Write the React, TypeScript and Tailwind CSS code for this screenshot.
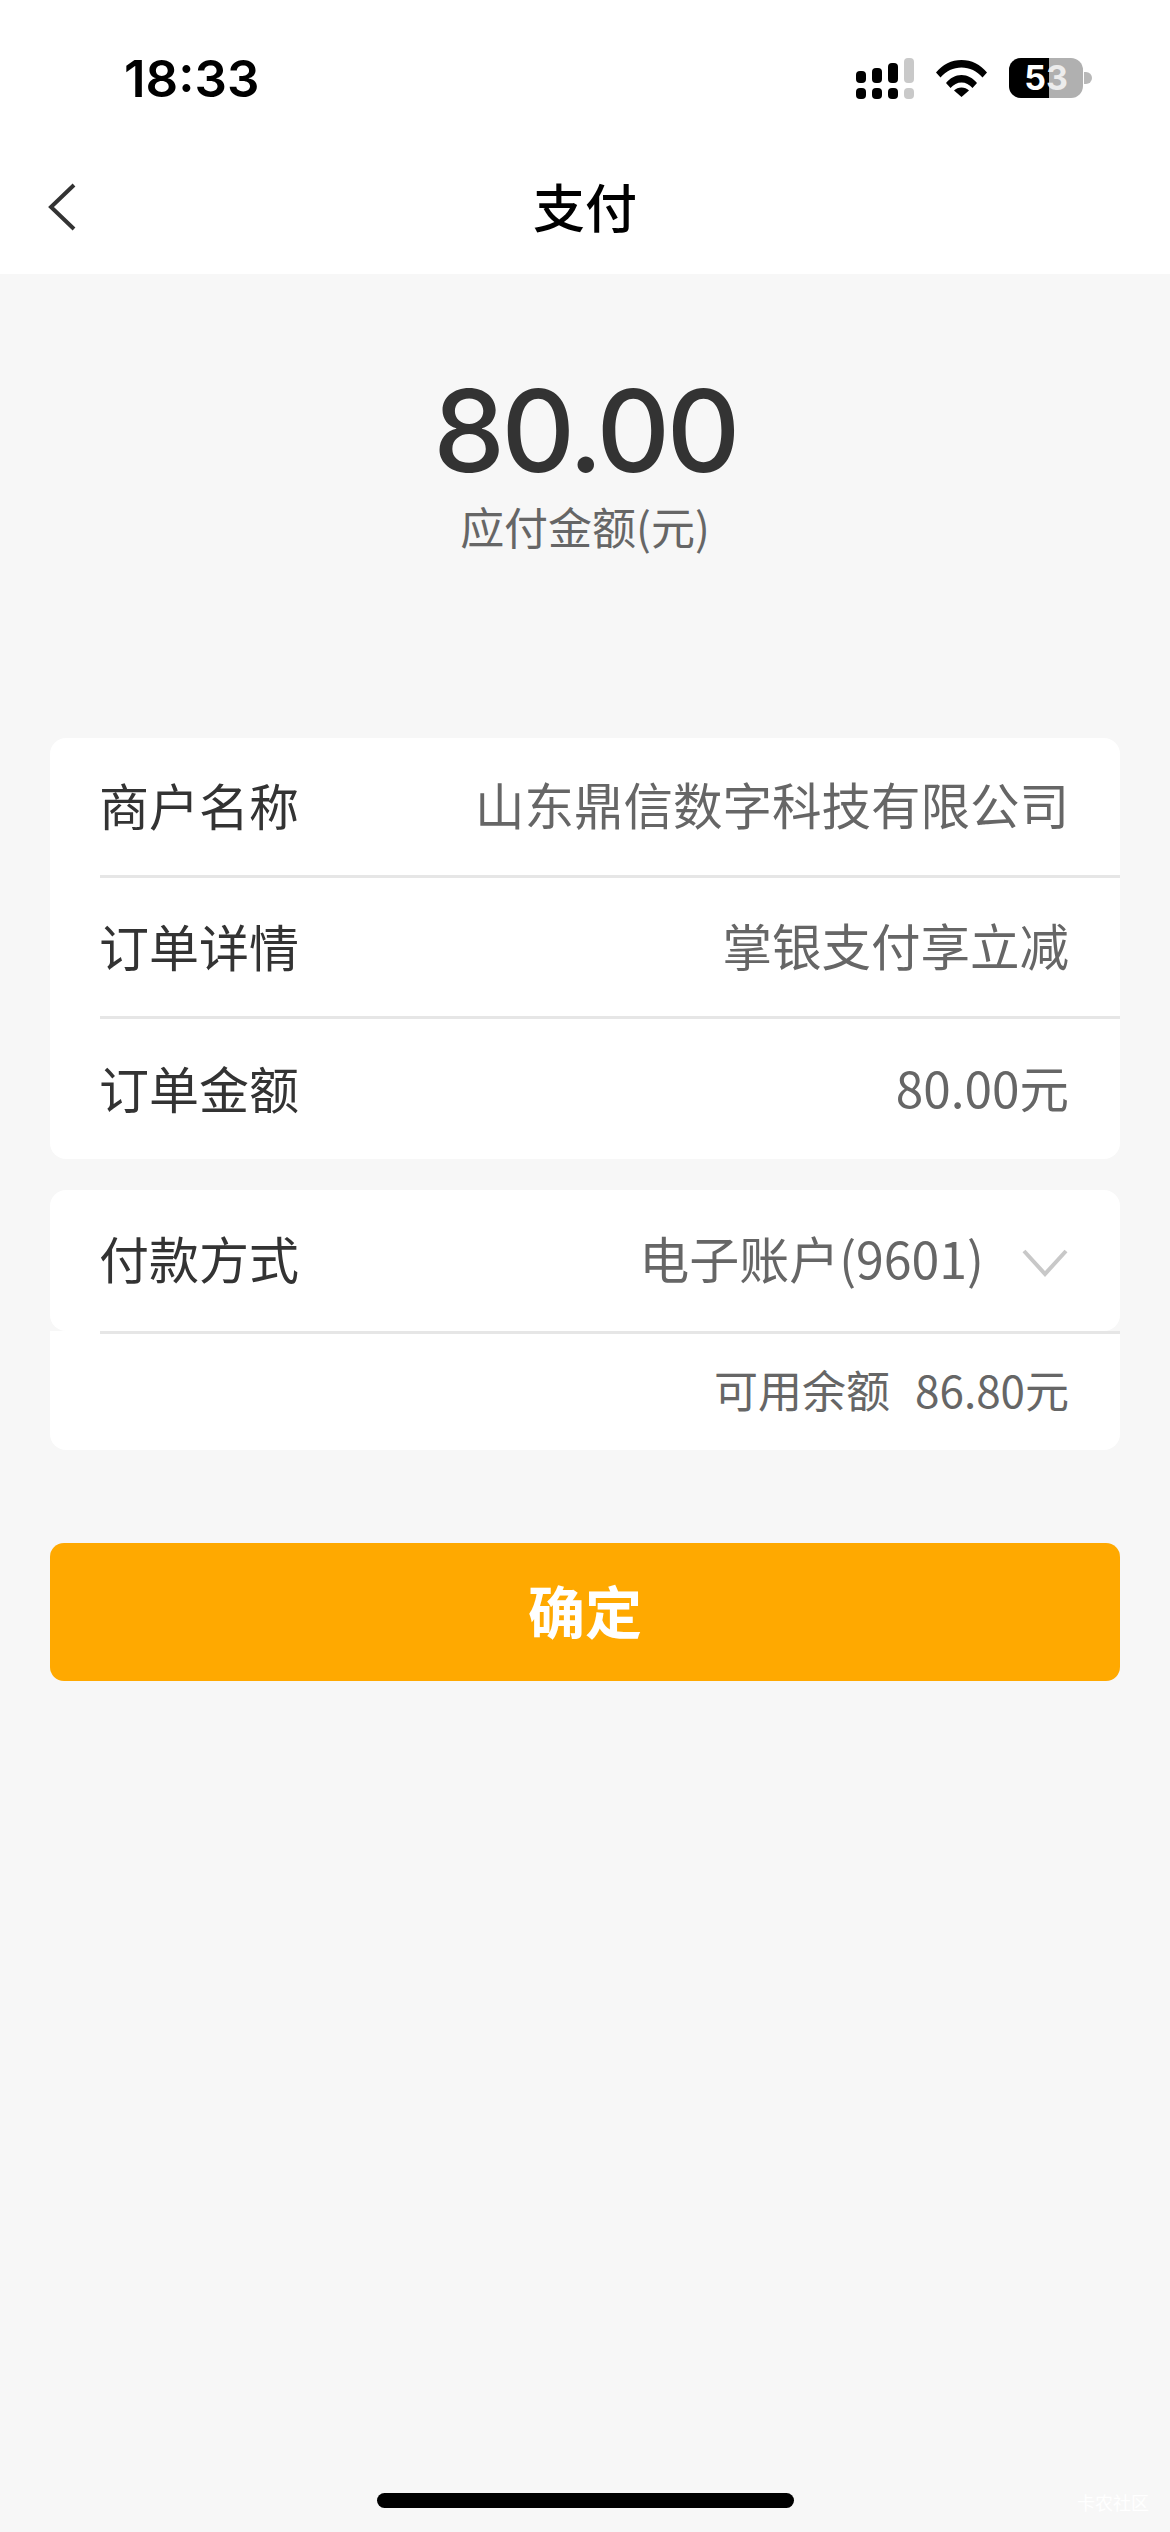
import React from "react";

const CJK = "font-['Noto_Sans_CJK_SC','Noto_Sans',sans-serif]";

function SignalIcon() {
  return (
    <svg width="58" height="41" viewBox="0 0 58 41">
      <rect x="0" y="13" width="10" height="12" rx="4" fill="#000" />
      <rect x="16" y="10" width="10" height="15" rx="4" fill="#000" />
      <rect x="32" y="5" width="10" height="20" rx="4" fill="#000" />
      <rect x="48" y="0" width="10" height="25" rx="4" fill="#c9c9c9" />
      <rect x="0" y="30" width="10" height="11" rx="4" fill="#000" />
      <rect x="16" y="30" width="10" height="11" rx="4" fill="#000" />
      <rect x="32" y="30" width="10" height="11" rx="4" fill="#000" />
      <rect x="48" y="30" width="10" height="11" rx="4" fill="#c9c9c9" />
    </svg>
  );
}

function WifiIcon() {
  return (
    <svg width="51" height="37" viewBox="0 0 51 37">
      <path d="M0 12.500C6.500 4.500 15.500 0 25.500 0S44.500 4.500 51 12.500L46.500 17.500C41 11 33.500 7.500 25.500 7.500S10 11 4.500 17.500Z" fill="#000" />
      <path d="M10 23C14 18 19.500 15 25.500 15S37 18 41 23L36.500 28C33.500 24.500 29.500 22.500 25.500 22.500S17.500 24.500 14.500 28Z" fill="#000" />
      <path d="M18 30.500C20 28.500 22.500 27.500 25.500 27.500S31 28.500 33 30.500L25.500 37Z" fill="#000" />
    </svg>
  );
}

function Battery() {
  return (
    <div className="flex items-center">
      <div className="relative w-[74px] h-[40px] rounded-[12px] overflow-hidden bg-[#b0b0b0] flex items-center justify-center">
        <div className="absolute left-0 top-0 bottom-0 w-[40px] bg-black" />
        <span className="relative flex font-['Inter',sans-serif] font-bold text-[34px] leading-none">
          <span className="text-white">5</span>
          <span className="text-[#ececec]">3</span>
        </span>
      </div>
      <div className="w-[8px] h-[12px] ml-[1px] rounded-r-full bg-[#b8b8b8]" />
    </div>
  );
}

function Row({ label, value, height }: { label: string; value: string; height: string }) {
  return (
    <div className={`${height} flex items-center justify-between pl-[49px] pr-[51px] pb-[5px]`}>
      <span className="text-[50px] leading-none text-[#333333]">{label}</span>
      <span className="text-[49.5px] leading-none text-[#666666]">{value}</span>
    </div>
  );
}

function Divider() {
  return <div className="ml-[50px] h-[3px] bg-[#e6e6e6]" />;
}

export default function App() {
  return (
    <div className={`${CJK} relative w-[1170px] h-[2532px] bg-[#f7f7f7] overflow-hidden flex flex-col`}>
      {/* Status bar + nav */}
      <div className="bg-white h-[274px] shrink-0">
        <div className="h-[154px] flex items-center justify-between pl-[124px] pr-[78px]">
          <span className="font-['Inter',sans-serif] font-semibold text-[51px] leading-none text-black mt-[2px]">
            18:33
          </span>
          <div className="flex items-center gap-[22px] mt-[2px]">
            <SignalIcon />
            <WifiIcon />
            <Battery />
          </div>
        </div>
        <div className="relative h-[104px] flex items-center justify-center">
          <svg
            className="absolute left-[46px] top-[28px]"
            width="32"
            height="50"
            viewBox="0 0 32 50"
            fill="none"
          >
            <path d="M28 3L5 25L28 47" stroke="#333333" strokeWidth="4" />
          </svg>
          <span className="text-[52px] leading-none font-medium text-black">支付</span>
        </div>
      </div>

      {/* Amount */}
      <div className="flex flex-col items-center pt-[93px] h-[464px] shrink-0">
        <span className="font-['Inter',sans-serif] font-medium text-[114px] leading-[128px] tracking-[-3.5px] text-[#333333]">
          80.00
        </span>
        <span className="text-[44px] leading-none mt-[9px] text-[#666666]">应付金额(元)</span>
      </div>

      {/* Order info */}
      <div className="mx-[50px] bg-white rounded-[16px]">
        <Row height="h-[137px]" label="商户名称" value="山东鼎信数字科技有限公司" />
        <Divider />
        <Row height="h-[138px]" label="订单详情" value="掌银支付享立减" />
        <Divider />
        <Row height="h-[140px]" label="订单金额" value="80.00元" />
      </div>

      {/* Payment method */}
      <div className="mx-[50px] mt-[31px]">
        <div className="h-[141px] bg-white rounded-[16px] flex items-center justify-between pl-[49px] pr-[52px] pb-[8px]">
          <span className="text-[50px] leading-none text-[#333333]">付款方式</span>
          <div className="flex items-center gap-[38px]">
            <span className="text-[50px] leading-none text-[#666666]">电子账户(9601)</span>
            <svg className="mt-[13px]" width="46" height="28" viewBox="0 0 46 28" fill="none">
              <path d="M2 2L23 25L44 2" stroke="#c8c8c8" strokeWidth="4" />
            </svg>
          </div>
        </div>
        <div className="bg-white rounded-b-[16px]">
          <Divider />
          <div className="h-[116px] flex items-center justify-end gap-[25px] pr-[51px] pb-[6px] text-[#666666] text-[44px] leading-none">
            <span>可用余额</span>
            <span>86.80元</span>
          </div>
        </div>
      </div>

      <button className="mx-[50px] mt-[93px] h-[138px] rounded-[14px] bg-[#ffa900] text-white text-[57px] leading-none font-bold pb-[5px]">
        确定
      </button>

      {/* Home indicator */}
      <div className="absolute left-[377px] top-[2493px] w-[417px] h-[15px] rounded-[8px] bg-black" />
      <span className="absolute left-[1077px] top-[2492px] text-[18px] leading-[20px] text-[#ffffff]">卡农社区</span>
    </div>
  );
}
